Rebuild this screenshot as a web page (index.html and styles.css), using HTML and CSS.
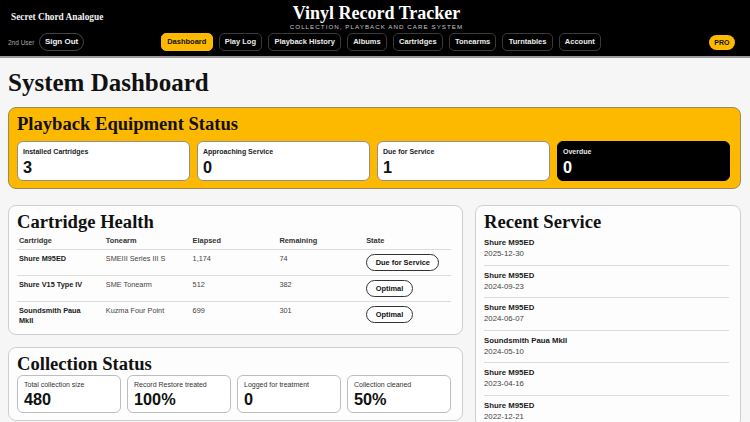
FILE: index.html
```html
<!DOCTYPE html>
<html lang="en">
<head>
<meta charset="utf-8">
<title>Vinyl Record Tracker</title>
<link rel="stylesheet" href="styles.css">
</head>
<body>
<header class="topbar">
  <div class="title-row">
    <div class="brand">Secret Chord Analogue</div>
    <div class="title-block">
      <div class="app-title">Vinyl Record Tracker</div>
      <div class="app-sub">COLLECTION, PLAYBACK AND CARE SYSTEM</div>
    </div>
    <div></div>
  </div>
  <div class="nav-row">
    <div class="user">
      <span class="user-name">2nd User</span>
      <span class="signout">Sign Out</span>
    </div>
    <nav class="nav">
      <span class="nav-btn active">Dashboard</span>
      <span class="nav-btn">Play Log</span>
      <span class="nav-btn">Playback History</span>
      <span class="nav-btn">Albums</span>
      <span class="nav-btn">Cartridges</span>
      <span class="nav-btn">Tonearms</span>
      <span class="nav-btn">Turntables</span>
      <span class="nav-btn">Account</span>
    </nav>
    <div class="pro-wrap"><span class="pro">PRO</span></div>
  </div>
</header>

<main class="main">
  <h1 class="page-title">System Dashboard</h1>

  <section class="panel panel-yellow">
    <h2 class="panel-title">Playback Equipment Status</h2>
    <div class="stat-grid">
      <div class="stat">
        <div class="stat-label">Installed Cartridges</div>
        <div class="stat-value">3</div>
      </div>
      <div class="stat">
        <div class="stat-label">Approaching Service</div>
        <div class="stat-value">0</div>
      </div>
      <div class="stat">
        <div class="stat-label">Due for Service</div>
        <div class="stat-value">1</div>
      </div>
      <div class="stat stat-dark">
        <div class="stat-label">Overdue</div>
        <div class="stat-value">0</div>
      </div>
    </div>
  </section>

  <div class="lower">
    <div class="left-col">
      <section class="panel panel-health">
        <h2 class="panel-title">Cartridge Health</h2>
        <table class="health">
          <thead>
            <tr><th>Cartridge</th><th>Tonearm</th><th>Elapsed</th><th>Remaining</th><th>State</th></tr>
          </thead>
          <tbody>
            <tr>
              <td class="cart">Shure M95ED</td><td>SMEIII Series III S</td><td>1,174</td><td>74</td>
              <td><span class="pill">Due for Service</span></td>
            </tr>
            <tr>
              <td class="cart">Shure V15 Type IV</td><td>SME Tonearm</td><td>512</td><td>382</td>
              <td><span class="pill">Optimal</span></td>
            </tr>
            <tr>
              <td class="cart">Soundsmith Paua MkII</td><td>Kuzma Four Point</td><td>699</td><td>301</td>
              <td><span class="pill">Optimal</span></td>
            </tr>
          </tbody>
        </table>
      </section>

      <section class="panel">
        <h2 class="panel-title">Collection Status</h2>
        <div class="stat-grid stat-grid-tight">
          <div class="stat stat-compact">
            <div class="stat-label light">Total collection size</div>
            <div class="stat-value">480</div>
          </div>
          <div class="stat stat-compact">
            <div class="stat-label light">Record Restore treated</div>
            <div class="stat-value">100%</div>
          </div>
          <div class="stat stat-compact">
            <div class="stat-label light">Logged for treatment</div>
            <div class="stat-value">0</div>
          </div>
          <div class="stat stat-compact">
            <div class="stat-label light">Collection cleaned</div>
            <div class="stat-value">50%</div>
          </div>
        </div>
      </section>
    </div>

    <section class="panel recent">
      <h2 class="panel-title">Recent Service</h2>
      <ul class="service-list">
        <li><div class="svc-name">Shure M95ED</div><div class="svc-date">2025-12-30</div></li>
        <li><div class="svc-name">Shure M95ED</div><div class="svc-date">2024-09-23</div></li>
        <li><div class="svc-name">Shure M95ED</div><div class="svc-date">2024-06-07</div></li>
        <li><div class="svc-name">Soundsmith Paua MkII</div><div class="svc-date">2024-05-10</div></li>
        <li><div class="svc-name">Shure M95ED</div><div class="svc-date">2023-04-16</div></li>
        <li><div class="svc-name">Shure M95ED</div><div class="svc-date">2022-12-21</div></li>
      </ul>
    </section>
  </div>
</main>
</body>
</html>
```

FILE: styles.css
```css
* { box-sizing: border-box; }

html, body {
  margin: 0;
  padding: 0;
}

body {
  background: #f6f6f6;
  color: #111;
  font-family: "Liberation Sans", Arial, sans-serif;
}

/* ---------- header ---------- */
.topbar {
  background: #000;
  height: 58px;
  border-bottom: 2px solid #9a9a9a;
}

.title-row {
  display: grid;
  grid-template-columns: 1fr auto 1fr;
  align-items: center;
  padding: 2.5px 8px 0 11px;
}

.brand {
  font-family: "Liberation Serif", "Times New Roman", serif;
  font-weight: bold;
  font-size: 9.3px;
  line-height: 12px;
  color: #f2f2f2;
}

.title-block {
  text-align: center;
}

.app-title {
  font-family: "Liberation Serif", "Times New Roman", serif;
  font-weight: bold;
  font-size: 18px;
  line-height: 20px;
  color: #fff;
}

.app-sub {
  font-size: 6.2px;
  line-height: 8px;
  letter-spacing: 1.05px;
  color: #c6c6c6;
}

.nav-row {
  display: grid;
  grid-template-columns: 1fr auto 1fr;
  align-items: center;
  padding: 0 15px 0 8px;
  margin-top: 2.5px;
}

.user {
  display: flex;
  align-items: center;
  gap: 5px;
}

.user-name {
  font-size: 6.5px;
  color: #a8a8a8;
}

.signout {
  display: inline-block;
  height: 18px;
  line-height: 16px;
  padding: 0 4.5px;
  border: 1px solid #444;
  border-radius: 9px;
  font-size: 8px;
  font-weight: bold;
  color: #f4f4f4;
}

.nav {
  display: flex;
  gap: 6px;
  margin-left: 19px;
}

.nav-btn {
  display: inline-block;
  height: 18px;
  line-height: 16px;
  padding: 0 5.2px;
  border: 1px solid #3a3a3a;
  border-radius: 5px;
  font-size: 7.5px;
  font-weight: bold;
  color: #ededed;
  white-space: nowrap;
}

.nav-btn.active {
  background: #fdb900;
  border-color: #fdb900;
  color: #111;
}

.pro-wrap {
  display: flex;
  justify-content: flex-end;
}

.pro {
  display: inline-block;
  height: 15px;
  line-height: 15px;
  padding: 0 5.5px;
  border-radius: 8px;
  background: #fdb900;
  color: #111;
  font-size: 7px;
  font-weight: bold;
}

/* ---------- main ---------- */
.main {
  padding: 0 9px 0 8px;
}

.page-title {
  margin: 9.5px 0 9.5px;
  font-family: "Liberation Serif", "Times New Roman", serif;
  font-weight: bold;
  font-size: 25px;
  line-height: 30px;
}

.panel {
  background: #fdfdfd;
  border: 1px solid #cfcfcf;
  border-radius: 8px;
  padding: 5px 11px 7px 8px;
}

.panel-yellow {
  background: #fdb900;
  border-color: #9c8a5a;
  padding: 5px 10px 7px 8px;
}

.panel-health {
  padding-bottom: 4px;
}

.panel-title {
  margin: 0;
  font-family: "Liberation Serif", "Times New Roman", serif;
  font-weight: bold;
  font-size: 18.6px;
  line-height: 22px;
  color: #111;
}

.stat-grid {
  display: grid;
  grid-template-columns: repeat(4, 1fr);
  gap: 7px;
  margin-top: 6px;
}

.stat-grid-tight {
  gap: 6px;
  margin-top: 0;
}

.stat {
  background: #fff;
  border: 1px solid #8f8f8f;
  border-radius: 6px;
  padding: 4.5px 5px 4.5px;
}

.stat-dark {
  background: #000;
  border-color: #000;
  color: #fff;
}

.stat-compact {
  border-color: #bdbdbd;
  padding: 3.5px 6px 3.5px;
}

.stat-label {
  font-size: 7px;
  line-height: 9px;
  font-weight: bold;
  color: #222;
  margin-bottom: 2px;
}

.stat-dark .stat-label {
  color: #e8e8e8;
}

.stat-label.light {
  font-weight: normal;
  color: #333;
  margin-bottom: 1.5px;
}

.stat-value {
  font-size: 16.3px;
  line-height: 18px;
  font-weight: bold;
}

/* ---------- lower area ---------- */
.lower {
  display: grid;
  grid-template-columns: 455px 1fr;
  gap: 12px;
  margin-top: 16px;
  align-items: start;
}

.left-col {
  display: flex;
  flex-direction: column;
  gap: 12px;
}

.health {
  width: 100%;
  border-collapse: collapse;
  table-layout: fixed;
}

.health th {
  text-align: left;
  font-size: 7.4px;
  line-height: 10px;
  font-weight: bold;
  color: #333;
  padding: 2.5px 2px 3.5px;
  border-bottom: 1px solid #dcdcdc;
}

.health td {
  vertical-align: top;
  font-size: 7.3px;
  line-height: 10px;
  color: #444;
  padding: 4px 9px 4px 2px;
}

.health tbody tr + tr td {
  border-top: 1px solid #dcdcdc;
}

.health td.cart {
  font-weight: bold;
  color: #1a1a1a;
}

.pill {
  display: inline-block;
  vertical-align: top;
  height: 17px;
  line-height: 15px;
  padding: 0 8.5px;
  border: 1px solid #333;
  border-radius: 9px;
  font-size: 7.4px;
  font-weight: bold;
  color: #111;
  background: #fff;
  white-space: nowrap;
}

.recent {
  padding-bottom: 0;
}

.service-list {
  list-style: none;
  margin: 0;
  padding: 0;
}

.service-list li {
  padding: 4px 0 5.5px;
  border-bottom: 1px solid #dcdcdc;
}

.service-list li:last-child {
  border-bottom: none;
}

.svc-name {
  font-size: 7.8px;
  line-height: 11px;
  font-weight: bold;
  color: #1a1a1a;
}

.svc-date {
  font-size: 7.8px;
  line-height: 11px;
  color: #444;
}
```
